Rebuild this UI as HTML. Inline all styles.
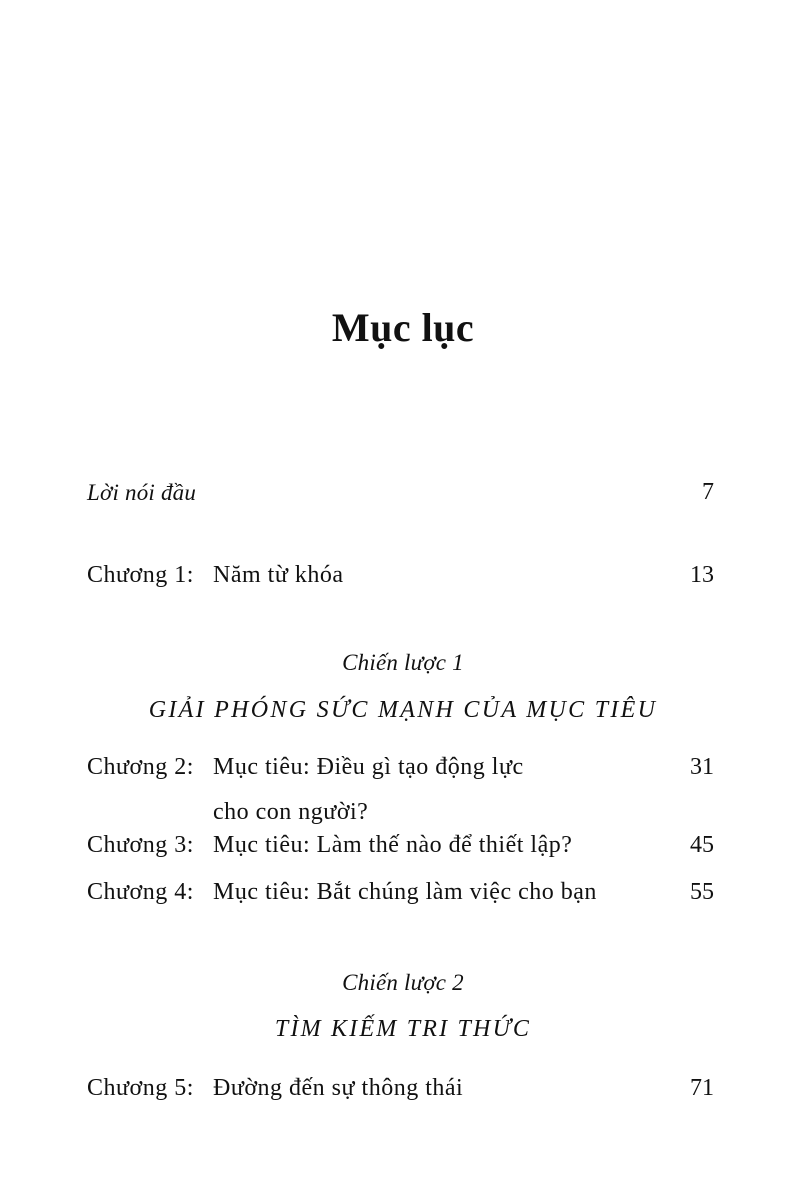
<!DOCTYPE html>
<html><head><meta charset="utf-8"><style>
body{margin:0;width:800px;height:1190px;background:#fff;position:relative;overflow:hidden;font-family:"Liberation Serif",serif;color:#111}
.a{position:absolute;white-space:nowrap;font-size:24px;line-height:24px;letter-spacing:0.5px}
.r{text-align:right;width:100px;letter-spacing:0}
.c{left:0;width:806px;text-align:center}
.i{font-style:italic;font-size:23px;letter-spacing:0.2px}
</style></head><body>
<div class="a c" style="top:308px;font-size:40px;line-height:40px;font-weight:bold;letter-spacing:0.5px">Mục lục</div>
<div class="a i" style="left:87px;top:481px">Lời nói đầu</div>
<div class="a r" style="left:614px;top:480px">7</div>
<div class="a" style="left:87px;top:563px">Chương 1:</div>
<div class="a" style="left:213px;top:563px">Năm từ khóa</div>
<div class="a r" style="left:614px;top:563px">13</div>
<div class="a c i" style="top:651px">Chiến lược 1</div>
<div class="a c i" style="top:698px;font-size:24px;letter-spacing:2.3px">GIẢI PHÓNG SỨC MẠNH CỦA MỤC TIÊU</div>
<div class="a" style="left:87px;top:755px">Chương 2:</div>
<div class="a" style="left:213px;top:755px">Mục tiêu: Điều gì tạo động lực</div>
<div class="a r" style="left:614px;top:755px">31</div>
<div class="a" style="left:213px;top:800px">cho con người?</div>
<div class="a" style="left:87px;top:833px">Chương 3:</div>
<div class="a" style="left:213px;top:833px">Mục tiêu: Làm thế nào để thiết lập?</div>
<div class="a r" style="left:614px;top:833px">45</div>
<div class="a" style="left:87px;top:880px">Chương 4:</div>
<div class="a" style="left:213px;top:880px">Mục tiêu: Bắt chúng làm việc cho bạn</div>
<div class="a r" style="left:614px;top:880px">55</div>
<div class="a c i" style="top:971px">Chiến lược 2</div>
<div class="a c i" style="top:1017px;font-size:24px;letter-spacing:2.2px">TÌM KIẾM TRI THỨC</div>
<div class="a" style="left:87px;top:1076px">Chương 5:</div>
<div class="a" style="left:213px;top:1076px">Đường đến sự thông thái</div>
<div class="a r" style="left:614px;top:1076px">71</div>
</body></html>
